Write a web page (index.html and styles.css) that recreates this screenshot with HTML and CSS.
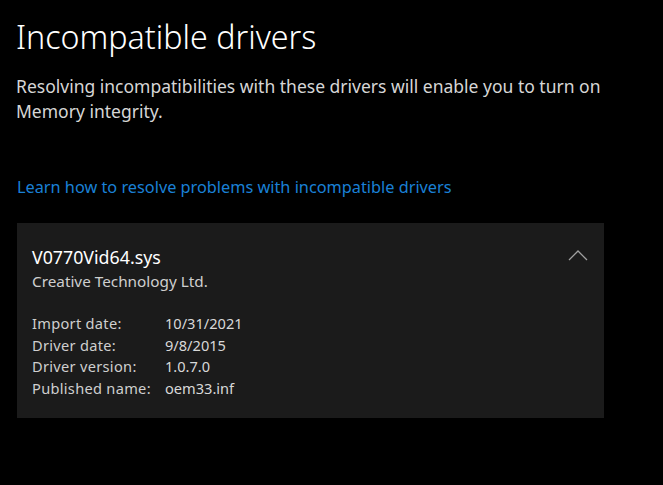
FILE: index.html
```html
<!DOCTYPE html>
<html>
<head>
  <meta charset="UTF-8">
  <title>Incompatible drivers</title>
  <link rel="stylesheet" href="styles.css">
</head>
<body>
  <div id="page">
    <h1>Incompatible drivers</h1>
    <p class="intro">Resolving incompatibilities with these drivers will enable you to turn on Memory integrity.</p>
    <a class="learnLink" href="#">Learn how to resolve problems with incompatible drivers</a>

    <div class="driverCard">
      <div class="cardHead">
        <div>
          <div class="driverName">V0770Vid64.sys</div>
          <div class="vendor">Creative Technology Ltd.</div>
        </div>
        <svg class="chevron" width="20" height="11" viewBox="0 0 20 11">
          <polyline points="1,10 10,1 19,10" fill="none" stroke="#a0a0a0" stroke-width="1.3"/>
        </svg>
      </div>
      <div class="details">
        <div class="label">Import date:</div><div class="value">10/31/2021</div>
        <div class="label">Driver date:</div><div class="value">9/8/2015</div>
        <div class="label">Driver version:</div><div class="value">1.0.7.0</div>
        <div class="label">Published name:</div><div class="value">oem33.inf</div>
      </div>
    </div>
  </div>
</body>
</html>
```

FILE: styles.css
```css
body {
  margin: 0;
  padding: 0;
  background: #000000;
  color: #ffffff;
  font-family: "Noto Sans", "Open Sans", sans-serif;
}
#page {
  padding: 14px 0 0 16px;
  width: 620px;
}
h1 {
  font-size: 32.2px;
  font-weight: 300;
  margin: 0;
  line-height: 46px;
  color: #ffffff;
}
.intro {
  font-size: 17.5px;
  line-height: 25px;
  color: #d6d6d6;
  margin: 14px 0 0 0;
}
.learnLink {
  display: block;
  margin: 52px 0 0 1px;
  font-size: 16.3px;
  color: #1a80d6;
  text-decoration: none;
}
.driverCard {
  margin: 25px 0 0 1px;
  width: 587px;
  height: 195px;
  background: #1b1b1b;
  box-sizing: border-box;
  padding: 21px 16px 0 15px;
}
.cardHead {
  display: flex;
  justify-content: space-between;
  align-items: flex-start;
}
.chevron {
  margin-top: 6px;
}
.driverName {
  font-size: 17.8px;
  color: #ffffff;
  line-height: 26px;
}
.vendor {
  font-size: 15.3px;
  color: #cfcfcf;
  line-height: 22px;
}
.details {
  display: grid;
  grid-template-columns: 133px auto;
  margin-top: 21px;
  font-size: 14.6px;
  line-height: 21.7px;
  color: #cfcfcf;
}
.details .label {
  letter-spacing: 0.3px;
}
.details .value {
  color: #d8d8d8;
}
```
